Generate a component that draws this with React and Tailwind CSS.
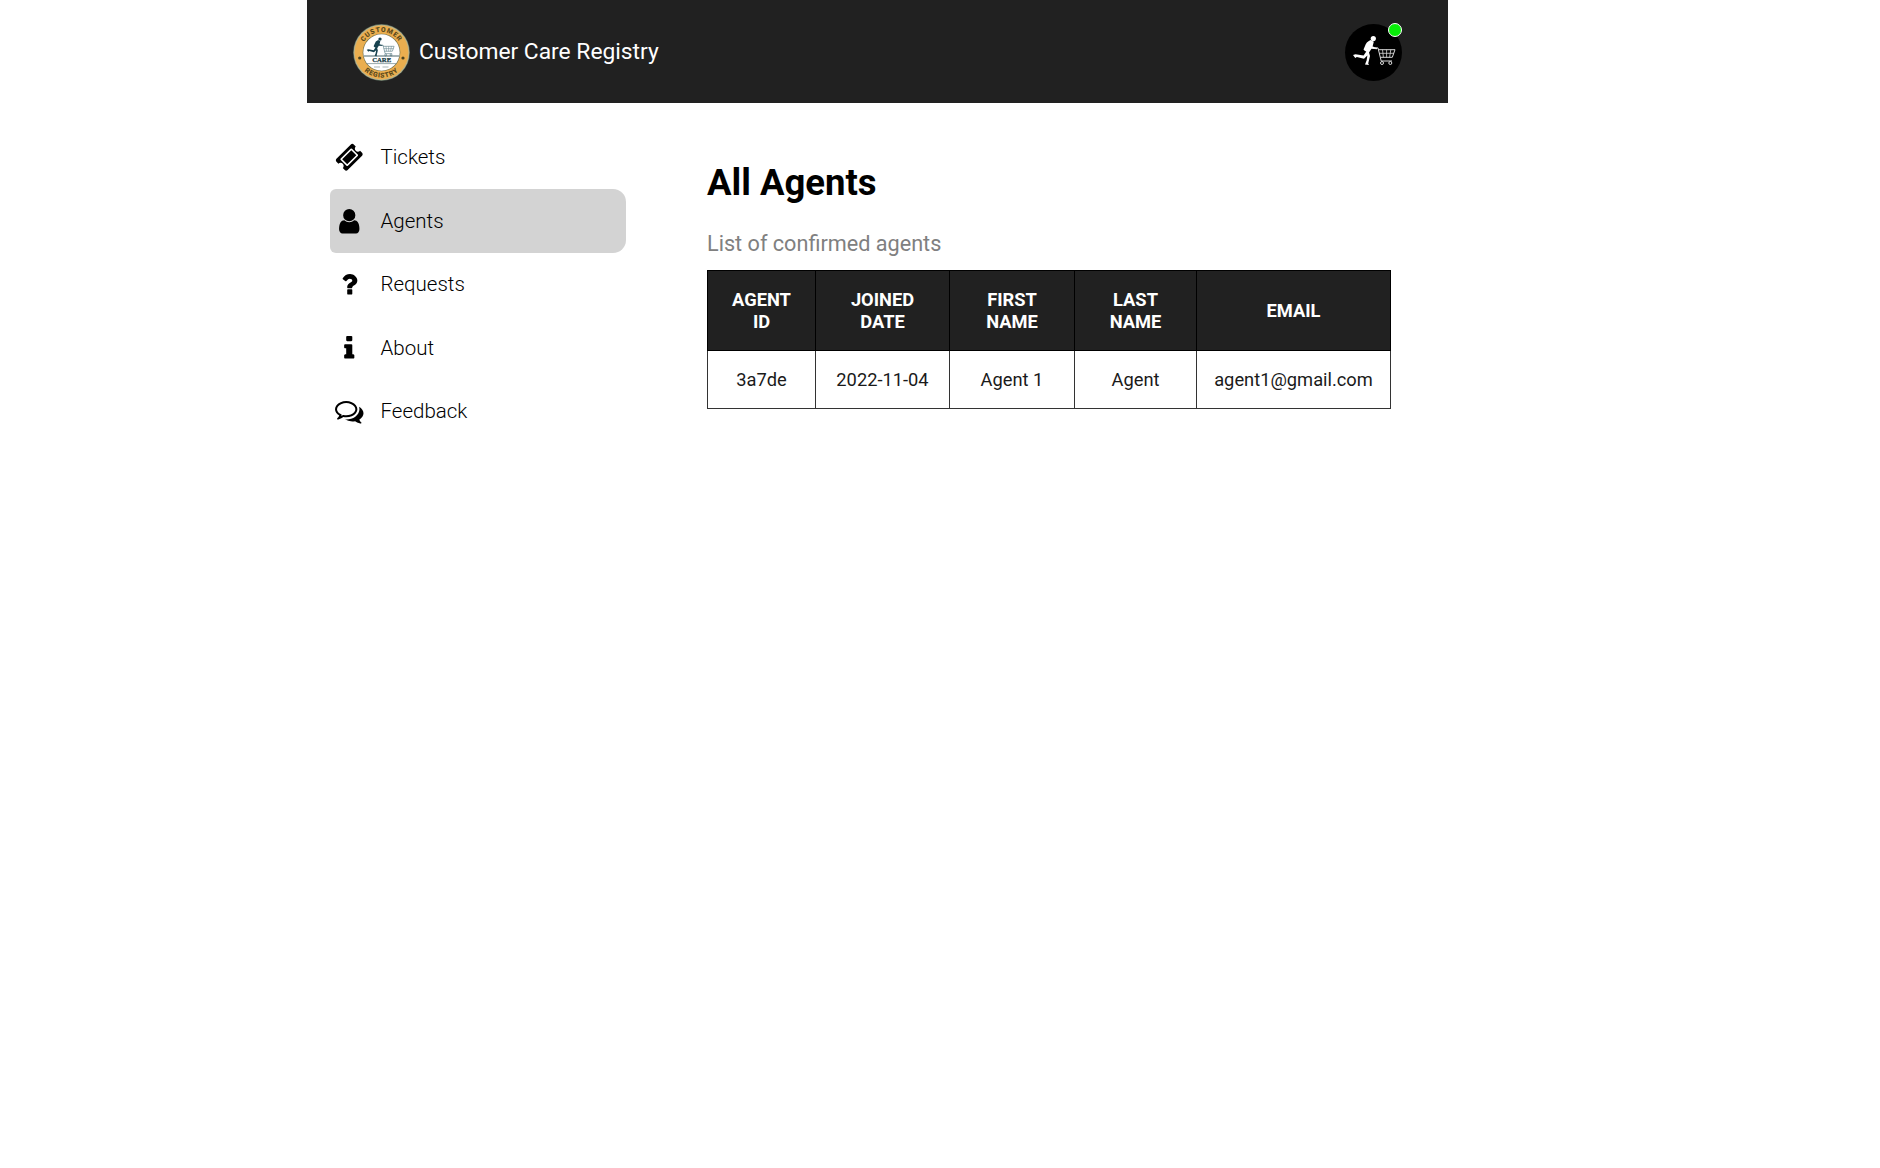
import React from "react";

const paths = {
  ticket:
    "M1024 452l316 316-572 572-316-316zm-211 979l618-618q19-19 19-45t-19-45l-362-362q-18-18-45-18t-45 18l-618 618q-19 19-19 45t19 45l362 362q18 18 45 18t45-18zm889-637l-907 908q-37 37-90.5 37t-90.5-37l-126-126q56-56 56-136t-56-136-136-56-136 56l-125-126q-37-37-37-90.5t37-90.5l907-906q37-37 90.5-37t90.5 37l125 125q-56 56-56 136t56 136 136 56 136-56l126 125q37 37 37 90.5t-37 90.5z",
  user: "M1536 1399q0 109-62.5 187t-150.5 78h-854q-88 0-150.5-78t-62.5-187q0-85 8.5-160.5t31.5-152 58.5-131 94-89 134.5-34.5q131 128 313 128t313-128q76 0 134.5 34.5t94 89 58.5 131 31.5 152 8.5 160.5zm-256-887q0 159-112.5 271.5t-271.5 112.5-271.5-112.5-112.5-271.5 112.5-271.5 271.5-112.5 271.5 112.5 112.5 271.5z",
  question:
    "M1088 1256v240q0 16-12 28t-28 12h-240q-16 0-28-12t-12-28v-240q0-16 12-28t28-12h240q16 0 28 12t12 28zm316-600q0 54-15.5 101t-35 76.5-55 59.5-57.5 43.5-61 35.5q-41 23-68.5 65t-27.5 67q0 17-12 32.5t-28 15.5h-240q-15 0-25.5-18.5t-10.5-37.5v-45q0-83 65-156.5t143-108.5q59-27 84-56t25-76q0-42-46.5-74t-107.5-32q-65 0-108 29-35 25-107 115-13 16-31 16-12 0-25-8l-164-125q-13-10-15.5-25t5.5-28q160-266 464-266 80 0 161 31t146 83 106 127.5 41 158.5z",
  info: "M1216 1344v128q0 26-19 45t-45 19h-512q-26 0-45-19t-19-45v-128q0-26 19-45t45-19h64v-384h-64q-26 0-45-19t-19-45v-128q0-26 19-45t45-19h384q26 0 45 19t19 45v576h64q26 0 45 19t19 45zm-128-1152v192q0 26-19 45t-45 19h-256q-26 0-45-19t-19-45v-192q0-26 19-45t45-19h256q26 0 45 19t19 45z",
  comments:
    "M704 384q-153 0-286 52t-211.5 141-78.5 191q0 82 53 158t149 132l97 56-35 84q34-20 62-39l44-31 53 10q78 14 153 14 153 0 286-52t211.5-141 78.5-191-78.5-191-211.5-141-286-52zm0-128q191 0 353.5 68.5t256.5 186.5 94 257-94 257-256.5 186.5-353.5 68.5q-86 0-176-16-124 88-278 128-36 9-86 16h-3q-11 0-20.5-8t-11.5-21q-1-3-1-6.5t.5-6.5 2-6l2.5-5 3.5-5.5 4-5 4.5-5 4-4.5q5-6 23-25t26-29.5 22.5-29 25-38.5 20.5-44q-124-72-195-177t-71-224q0-139 94-257t256.5-186.5 353.5-68.5zm822 1169q10 24 20.5 44t25 38.5 22.5 29 26 29.5 23 25q1 1 4 4.5t4.5 5 4 5 3.5 5.5l2.5 5 2 6 .5 6.5-1 6.5q-3 14-13 22t-22 7q-50-7-86-16-154-40-278-128-90 16-176 16-271 0-472-132 58 4 88 4 161 0 309-45t264-129q125-92 192-212t67-254q0-77-23-152 129 71 204 178t75 230q0 120-71 224.5t-195 176.5z",
};

const menu = [
  { label: "Tickets", icon: "ticket" },
  { label: "Agents", icon: "user", active: true },
  { label: "Requests", icon: "question" },
  { label: "About", icon: "info" },
  { label: "Feedback", icon: "comments" },
];

const columns = ["AGENT ID", "JOINED DATE", "FIRST NAME", "LAST NAME", "EMAIL"];
const agent = ["3a7de", "2022-11-04", "Agent 1", "Agent", "agent1@gmail.com"];

function Runner() {
  return (
    <g>
      <circle cx="28.3" cy="14.6" r="2.6" />
      <path d="M25.5 16 Q21 18 20 22 L18.5 25.5 L20 27 L21.3 27.4 L18.6 31.6 L10.5 30.2 L8 31 L10.3 34 L11.8 33 L19 34.8 L22.4 31.6 L21.6 36.5 L20 40.5 L24 41 L23.2 39.5 L25 32 L24 28.5 L26.5 24.8 L32 25.3 L32.4 24 L27.6 22.6 L28.8 17.8 Z" />
    </g>
  );
}

function Cart() {
  return (
    <g fill="none" stroke="currentColor" strokeWidth="1">
      <path d="M29 23.9 H33 L36.2 37 H47" />
      <path d="M33.2 25.7 H50 L47.3 33.3 H35.2" />
      <path d="M34 29.3 H49 M37.5 25.7 L38.4 33.3 M41.6 25.7 V33.3 M45.8 25.7 L44.6 33.3" strokeWidth="0.8" />
      <circle cx="37" cy="39" r="1.5" />
      <circle cx="45.3" cy="39" r="1.5" />
    </g>
  );
}

function Logo() {
  return (
    <svg viewBox="0 0 57 57" className="h-[57px] w-[57px] shrink-0">
      <defs>
        <path id="upper-arc" d="M8 28.5 A20.5 20.5 0 0 1 49 28.5" />
        <path id="lower-arc" d="M3.4 28.5 A25.1 25.1 0 0 0 53.6 28.5" />
      </defs>
      <circle cx="28.5" cy="28.5" r="28.4" fill="#57675a" />
      <circle cx="28.5" cy="28.5" r="27.8" fill="#b9b48d" />
      <circle cx="28.5" cy="28.5" r="26.9" fill="#eaae4f" />
      <circle cx="28.5" cy="28.5" r="18.8" fill="#6b6a45" />
      <circle cx="28.5" cy="28.5" r="18.2" fill="#ffffff" />
      <g fill="#5b4a1c" fontFamily="Roboto, sans-serif" fontWeight="900" fontSize="6.8" textAnchor="middle" letterSpacing="0.7">
        <text>
          <textPath href="#upper-arc" startOffset="50%">CUSTOMER</textPath>
        </text>
        <text>
          <textPath href="#lower-arc" startOffset="50%">REGISTRY</textPath>
        </text>
      </g>
      <circle cx="6.7" cy="34" r="1.6" fill="#4a4320" />
      <circle cx="50" cy="34" r="1.6" fill="#4a4320" />
      <g transform="translate(8.6 5.6) scale(.65)" fill="#17414e" color="#5d7f88">
        <Runner />
        <Cart />
      </g>
      <path d="M11 32 H46" stroke="#35555c" strokeWidth="0.9" />
      <text x="28.7" y="38.3" textAnchor="middle" fontFamily="Liberation Serif, serif" fontWeight="700" fontSize="7" fill="#173b45" stroke="#173b45" strokeWidth="0.25" textLength="19" lengthAdjust="spacingAndGlyphs">
        CARE
      </text>
      <path d="M13.5 39.6 H43.5" stroke="#6d8588" strokeWidth="0.7" />
      <path d="M21 43 H27 M29.5 43 H35.5" stroke="#a8b5b6" strokeWidth="1.2" />
    </svg>
  );
}

function Avatar() {
  return (
    <div className="relative h-[57px] w-[57px] rounded-full bg-black">
      <svg viewBox="0 0 57 57" className="h-[57px] w-[57px] text-[#d8d8d8]">
        <g fill="#ffffff">
          <Runner />
        </g>
        <Cart />
      </svg>
      <span className="absolute -top-px right-0 h-[14px] w-[14px] rounded-full border-[1.5px] border-white bg-[#08ee08]" />
    </div>
  );
}

export default function App() {
  return (
    <div className="min-h-[1168px] bg-white font-[Roboto,sans-serif] text-black">
      <div className="ml-[307px] w-[1141px]">
        <header className="flex h-[103px] items-center justify-between bg-[#212121] px-[46px] pt-px">
          <div className="flex items-center gap-[9px]">
            <Logo />
            <span className="pt-px text-[22.8px] text-white">Customer Care Registry</span>
          </div>
          <Avatar />
        </header>
        <div className="flex">
          <nav className="ml-[23px] mt-[22.5px] w-[296px]">
            {menu.map((item) => (
              <div
                key={item.label}
                className={
                  "flex h-[63.5px] items-center rounded-l-[6px] rounded-r-[13px] pl-[5px] " +
                  (item.active ? "bg-[#d3d3d3]" : "")
                }
              >
                <svg viewBox="0 0 1792 1792" className="mr-[17px] h-[28.5px] w-[28.5px]">
                  <path d={paths[item.icon]} />
                </svg>
                <span className="pt-px text-[20.5px] font-light">{item.label}</span>
              </div>
            ))}
          </nav>
          <main className="ml-[81px] pt-[58px]">
            <h1 className="text-[36.5px] leading-[44px] font-bold">All Agents</h1>
            <p className="mt-[26px] text-[21.65px] leading-[26px] text-[#808080]">List of confirmed agents</p>
            <table className="mt-[13px] w-[683px] table-fixed border-collapse text-center text-[18.3px] leading-[22px]">
              <colgroup>
                <col className="w-[108px]" />
                <col className="w-[134px]" />
                <col className="w-[125px]" />
                <col className="w-[122px]" />
                <col className="w-[194px]" />
              </colgroup>
              <thead>
                <tr className="h-[80px] bg-[#212121] text-white">
                  {columns.map((heading) => (
                    <th key={heading} className="border border-black px-[22px] font-bold">{heading}</th>
                  ))}
                </tr>
              </thead>
              <tbody>
                <tr className="h-[58px] text-[#1a1a1a]">
                  {agent.map((value) => (
                    <td key={value} className="border border-[#333]">{value}</td>
                  ))}
                </tr>
              </tbody>
            </table>
          </main>
        </div>
      </div>
    </div>
  );
}
